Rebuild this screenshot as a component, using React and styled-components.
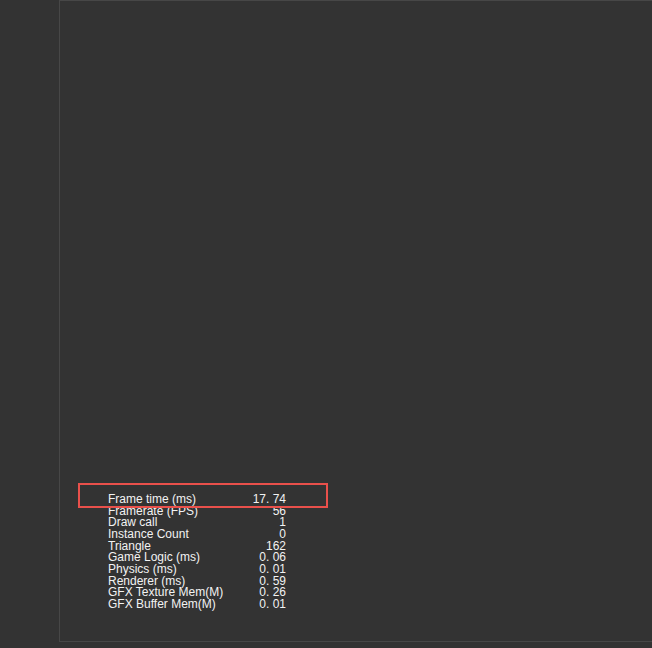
import React from 'react';
import styled, { createGlobalStyle } from 'styled-components';

const stats = [
  { label: 'Frame time (ms)', value: '17. 74' },
  { label: 'Framerate (FPS)', value: '56' },
  { label: 'Draw call', value: '1' },
  { label: 'Instance Count', value: '0' },
  { label: 'Triangle', value: '162' },
  { label: 'Game Logic (ms)', value: '0. 06' },
  { label: 'Physics (ms)', value: '0. 01' },
  { label: 'Renderer (ms)', value: '0. 59' },
  { label: 'GFX Texture Mem(M)', value: '0. 26' },
  { label: 'GFX Buffer Mem(M)', value: '0. 01' },
];

const GlobalStyle = createGlobalStyle`
  html, body {
    margin: 0;
    padding: 0;
    background: #333333;
    overflow: hidden;
  }
  body {
    font-family: "Liberation Sans", Arial, sans-serif;
  }
`;

const Layout = styled.div`
  display: flex;
  width: 652px;
  height: 648px;
  background: #333333;
`;

const Sidebar = styled.div`
  width: 59px;
  flex-shrink: 0;
`;

const Viewport = styled.div`
  position: relative;
  flex: 1;
  height: 642px;
  box-sizing: border-box;
  border: 1px solid #474747;
  border-right: none;
  background: #333333;
`;

const StatsPanel = styled.div`
  position: absolute;
  left: 48px;
  top: 493px;
  display: grid;
  grid-template-columns: 140px 38px;
  font-size: 12px;
  line-height: 11.67px;
  color: #f2f2f2;
  white-space: nowrap;
`;

const Label = styled.span``;

const Value = styled.span`
  text-align: right;
`;

const Highlight = styled.div`
  position: absolute;
  left: 18px;
  top: 482px;
  width: 250px;
  height: 25px;
  box-sizing: border-box;
  border: 2px solid #e9504b;
`;

export default function App() {
  return (
    <>
      <GlobalStyle />
      <Layout>
        <Sidebar />
        <Viewport>
          <StatsPanel>
            {stats.map((s) => (
              <React.Fragment key={s.label}>
                <Label>{s.label}</Label>
                <Value>{s.value}</Value>
              </React.Fragment>
            ))}
          </StatsPanel>
          <Highlight />
        </Viewport>
      </Layout>
    </>
  );
}
